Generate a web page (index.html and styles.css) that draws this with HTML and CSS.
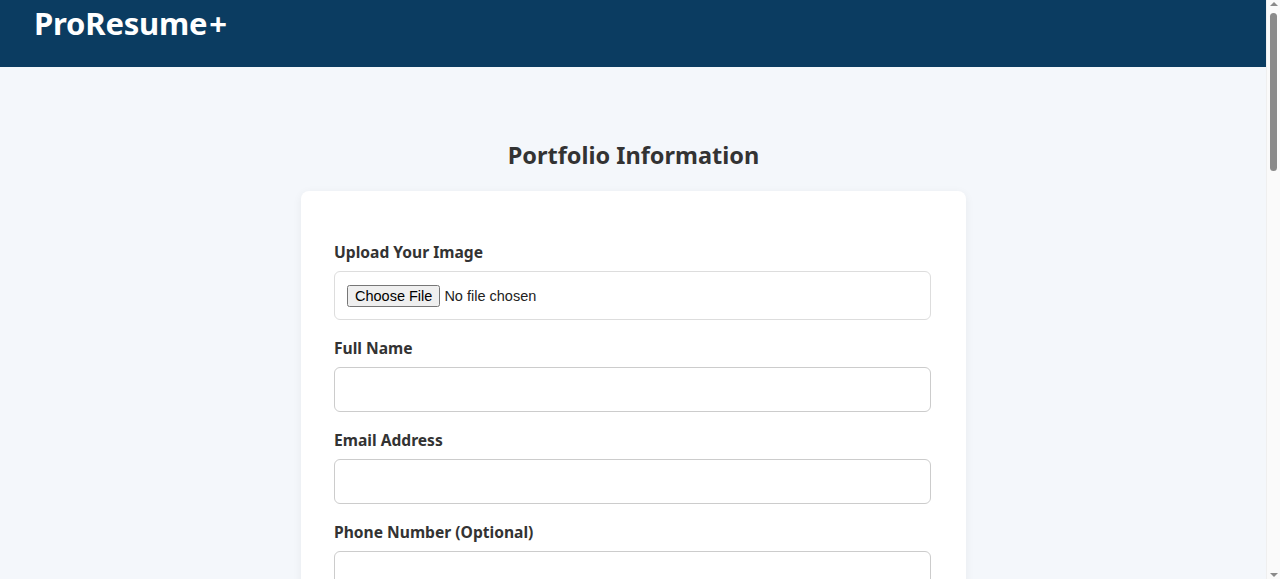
FILE: index.html
```html
<!DOCTYPE html>
<html lang="en">
<head>
<meta charset="utf-8">
<title>ProResume+ — Portfolio Information</title>
<link rel="stylesheet" href="styles.css">
</head>
<body>
<header class="topbar">
  <div class="logo">ProResume<span class="logo-plus">+</span></div>
</header>
<main class="main">
  <h2 class="page-title">Portfolio Information</h2>
  <form class="card">
    <div class="field">
      <label class="label" for="img">Upload Your Image</label>
      <div class="file-box"><input class="file-input" id="img" type="file"></div>
    </div>
    <div class="field">
      <label class="label" for="name">Full Name</label>
      <input class="text-input" id="name" type="text">
    </div>
    <div class="field">
      <label class="label" for="email">Email Address</label>
      <input class="text-input" id="email" type="email">
    </div>
    <div class="field">
      <label class="label" for="phone">Phone Number (Optional)</label>
      <input class="text-input" id="phone" type="tel">
    </div>
    <div class="field">
      <label class="label" for="about">About Me</label>
      <textarea class="text-input area" id="about"></textarea>
    </div>
    <div class="field">
      <label class="label" for="skills">Skills</label>
      <input class="text-input" id="skills" type="text">
    </div>
    <button class="submit" type="button">Generate Portfolio</button>
  </form>
</main>
<div class="scrollbar" aria-hidden="true">
  <span class="sb-arrow sb-up"></span>
  <span class="sb-thumb"></span>
  <span class="sb-arrow sb-down"></span>
</div>
</body>
</html>
```
FILE: styles.css
```css
html, body {
  margin: 0;
  padding: 0;
}
body {
  background: #f4f7fb;
  font-family: "Noto Sans", "Open Sans", sans-serif;
  color: #333;
  margin-right: 13px;
}
.topbar {
  background: #0b3c61;
  height: 67px;
  padding: 0 34px;
  box-sizing: border-box;
}
.logo {
  color: #fff;
  font-size: 31px;
  font-weight: 700;
  line-height: 46px;
  letter-spacing: -0.2px;
}
.logo-plus {
  margin-left: 2px;
}
.main {
  padding: 73px 0 60px;
  display: flex;
  flex-direction: column;
  align-items: center;
}
.page-title {
  margin: 0 0 21px;
  font-size: 23.5px;
  line-height: 30px;
  font-weight: 700;
  color: #333;
}
.card {
  width: 597px;
  background: #fff;
  border-radius: 8px;
  box-shadow: 0 2px 10px rgba(0, 0, 0, 0.06);
  padding: 51px 35px 40px 33px;
}
.field {
  display: flex;
  flex-direction: column;
  margin-bottom: 18px;
}
.label {
  font-size: 15.6px;
  line-height: 20px;
  font-weight: 700;
  color: #333;
  margin-bottom: 9px;
}
.file-box {
  height: 49px;
  box-sizing: border-box;
  border: 1px solid #ddd;
  border-radius: 6px;
  padding: 0 12px;
  display: flex;
  align-items: center;
}
.file-input {
  font-family: "Liberation Sans", Arial, sans-serif;
  font-size: 14.5px;
  color: #222;
}
.text-input {
  height: 45px;
  box-sizing: border-box;
  border: 1px solid #ccc;
  border-radius: 6px;
  font-size: 16px;
  padding: 0 12px;
  background: #fff;
}
.area {
  height: 110px;
  resize: vertical;
}
.submit {
  width: 100%;
  height: 46px;
  border: 0;
  border-radius: 6px;
  background: #0b3c61;
  color: #fff;
  font-family: "Noto Sans", sans-serif;
  font-size: 16px;
  font-weight: 700;
}
.scrollbar {
  position: fixed;
  top: 0;
  right: 0;
  bottom: 0;
  width: 13px;
  background: #fafafa;
  border-left: 1px solid #efefef;
  display: flex;
  flex-direction: column;
  align-items: center;
}
.sb-arrow {
  width: 0;
  height: 0;
  border-left: 4px solid transparent;
  border-right: 4px solid transparent;
}
.sb-up {
  margin-top: 2px;
  border-bottom: 4px solid #8a8a8a;
}
.sb-down {
  margin-top: auto;
  margin-bottom: 2px;
  border-top: 4px solid #8a8a8a;
}
.sb-thumb {
  margin-top: 7px;
  width: 7px;
  height: 158px;
  border-radius: 4px;
  background: #8a8a8a;
}
```
